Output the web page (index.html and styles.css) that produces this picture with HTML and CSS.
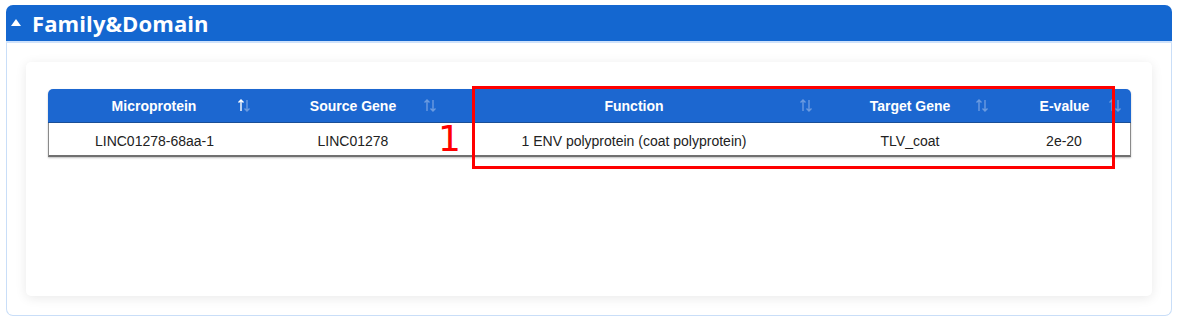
FILE: index.html
```html
<!DOCTYPE html>
<html lang="en">
<head>
  <meta charset="UTF-8" />
  <meta name="viewport" content="width=device-width, initial-scale=1.0" />
  <title>Family&amp;Domain</title>
  <link rel="stylesheet" href="styles.css">
</head>
<body>
  <div class="panel">
    <div class="panel-head">
      <span class="caret"></span>
      <h2>Family&amp;Domain</h2>
    </div>
    <div class="panel-body">
      <div class="card">
        <div class="table-wrap">
          <table class="data-table">
            <thead>
              <tr>
                <th class="c1">Microprotein<svg class="sort active" viewBox="0 0 14 13"><path class="up" d="M4 12V1M1.5 3.5L4 1l2.5 2.5"/><path class="down" d="M10 1v11M7.5 9.5L10 12l2.5-2.5"/></svg></th>
                <th class="c2">Source Gene<svg class="sort" viewBox="0 0 14 13"><path class="up" d="M4 12V1M1.5 3.5L4 1l2.5 2.5"/><path class="down" d="M10 1v11M7.5 9.5L10 12l2.5-2.5"/></svg></th>
                <th class="c3">Function<svg class="sort" viewBox="0 0 14 13"><path class="up" d="M4 12V1M1.5 3.5L4 1l2.5 2.5"/><path class="down" d="M10 1v11M7.5 9.5L10 12l2.5-2.5"/></svg></th>
                <th class="c4">Target Gene<svg class="sort" viewBox="0 0 14 13"><path class="up" d="M4 12V1M1.5 3.5L4 1l2.5 2.5"/><path class="down" d="M10 1v11M7.5 9.5L10 12l2.5-2.5"/></svg></th>
                <th class="c5">E-value<svg class="sort" viewBox="0 0 14 13"><path class="up" d="M4 12V1M1.5 3.5L4 1l2.5 2.5"/><path class="down" d="M10 1v11M7.5 9.5L10 12l2.5-2.5"/></svg></th>
              </tr>
            </thead>
            <tbody>
              <tr>
                <td>LINC01278-68aa-1</td>
                <td>LINC01278</td>
                <td>1 ENV polyprotein (coat polyprotein)</td>
                <td>TLV_coat</td>
                <td>2e-20</td>
              </tr>
            </tbody>
          </table>
          <!-- annotation marks -->
          <span class="mark-num">1</span>
          <div class="mark-box"></div>
        </div>
      </div>
    </div>
  </div>
</body>
</html>
```

FILE: styles.css
```css
body {
  margin: 0;
  background: #fff;
  font-family: "Liberation Sans", Arial, sans-serif;
}
.panel {
  margin: 5px 10px 0 6px;
  height: 311px;
  box-sizing: border-box;
  border: 1px solid #c9def8;
  border-top: none;
  border-radius: 7px;
  display: flex;
  flex-direction: column;
}
.panel-head {
  background: #1467d0;
  height: 36px;
  border-radius: 7px 7px 0 0;
  margin: 0 -1px;
  display: flex;
  align-items: center;
  border-bottom: 2px solid #cfe2fb;
}
.panel-head h2 {
  margin: 0;
  color: #fff;
  font-family: "Open Sans", sans-serif;
  font-weight: 700;
  font-size: 22px;
  letter-spacing: 0.1px;
}
.caret {
  width: 0;
  height: 0;
  border-left: 5.5px solid transparent;
  border-right: 5.5px solid transparent;
  border-bottom: 7px solid #fff;
  margin: 0 11px 1px 5px;
}
.panel-body {
  flex: 1;
  padding: 19px 19px 19px 19px;
}
.card {
  height: 234px;
  box-sizing: border-box;
  background: #fff;
  border-radius: 5px;
  box-shadow: 0 2px 12px rgba(0, 0, 0, 0.09);
  padding: 27px 22px;
}
.table-wrap {
  position: relative;
}
.data-table {
  border-collapse: separate;
  border-spacing: 0;
  width: 1083px;
  table-layout: fixed;
  font-size: 14px;
  box-shadow: 0 1px 2px rgba(0, 0, 0, 0.25);
  border-radius: 5px 5px 0 0;
}
.data-table th {
  background: #1c67d0;
  color: #fff;
  font-weight: 700;
  height: 33px;
  padding: 0;
  position: relative;
  border-bottom: 1px solid #1a4e96;
}
.data-table th.c1 { width: 212px; border-top-left-radius: 5px; }
.data-table th.c2 { width: 186px; }
.data-table th.c3 { width: 376px; }
.data-table th.c4 { width: 176px; }
.data-table th.c5 { width: 133px; border-top-right-radius: 5px; }
.sort {
  position: absolute;
  right: 9px;
  top: 10px;
  width: 14px;
  height: 13px;
  fill: none;
  stroke-width: 1.4;
}
.sort path {
  stroke: #6b9be0;
}
.sort.active .up {
  stroke: #fff;
}
.data-table td {
  height: 34px;
  padding: 3px 0 0;
  box-sizing: border-box;
  text-align: center;
  color: #222;
  background: #fff;
  border-bottom: 2px solid #707070;
}
.data-table td:first-child {
  border-left: 1px solid #8a8a8a;
}
.data-table td:last-child {
  border-right: 1px solid #8a8a8a;
}
.mark-num {
  position: absolute;
  left: 390px;
  top: 30px;
  color: #f00;
  font-family: "DejaVu Sans", sans-serif;
  font-size: 36px;
  line-height: 40px;
}
.mark-box {
  position: absolute;
  left: 424px;
  top: -3px;
  width: 637px;
  height: 77px;
  border: 3px solid #f00;
}
```
